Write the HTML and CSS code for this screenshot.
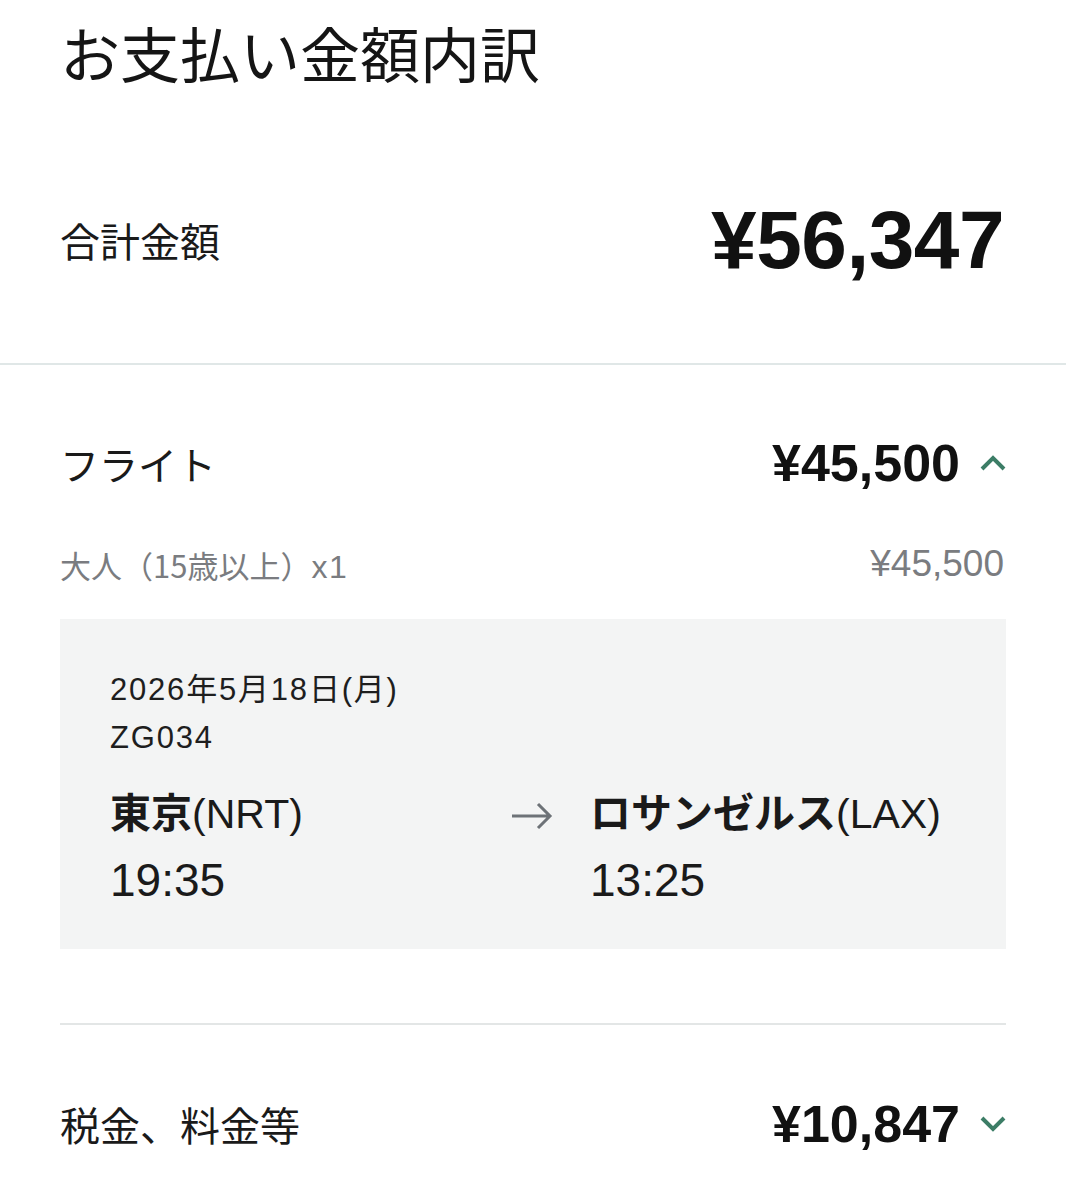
FILE: index.html
```html
<!DOCTYPE html>
<html lang="ja">
<head>
<meta charset="utf-8">
<link rel="stylesheet" href="styles.css">
</head>
<body>
<div class="page">
  <h1 class="title">お支払い金額内訳</h1>
  <div class="total-row">
    <span class="total-label">合計金額</span>
    <span class="total-amount">¥56,347</span>
  </div>
  <div class="section">
    <div class="sec-row">
      <span class="sec-label">フライト</span>
      <span class="sec-amount">¥45,500
        <svg class="chev" width="26" height="16" viewBox="0 0 26 16"><path d="M2 14 L13 3 L24 14" fill="none" stroke="#3c7d66" stroke-width="4"/></svg>
      </span>
    </div>
    <div class="sub-row">
      <span>大人（15歳以上）<span class="latin">x1</span></span>
      <span class="sub-amount">¥45,500</span>
    </div>
    <div class="flight-box">
      <div class="date">2026年5月18日(月)</div>
      <div class="flight-no">ZG034</div>
      <div class="route">
        <div class="city"><b>東京</b>(NRT)</div>
        <div class="arrow"><svg width="44" height="30" viewBox="0 0 44 30"><path d="M2 15 H40 M28 3 L40 15 L28 27" fill="none" stroke="#6d7277" stroke-width="3"/></svg></div>
        <div class="city"><b>ロサンゼルス</b>(LAX)</div>
        <div class="time">19:35</div>
        <div></div>
        <div class="time">13:25</div>
      </div>
    </div>
    <div class="divider"></div>
    <div class="sec-row tax">
      <span class="sec-label">税金、料金等</span>
      <span class="sec-amount">¥10,847
        <svg class="chev" width="26" height="16" viewBox="0 0 26 16"><path d="M2 2 L13 13 L24 2" fill="none" stroke="#3c7d66" stroke-width="4"/></svg>
      </span>
    </div>
  </div>
</div>
</body>
</html>
```

FILE: styles.css
```css
html, body {
  margin: 0;
  padding: 0;
  background: #ffffff;
}
body {
  font-family: "Liberation Sans", "Noto Sans CJK JP", sans-serif;
  color: #111;
  width: 1066px;
  overflow: hidden;
}
.page {
  height: 1200px;
}
.title {
  margin: 0;
  padding: 16px 0 0 60px;
  height: 100px;
  box-sizing: border-box;
  font-family: "Noto Sans CJK JP", sans-serif;
  font-weight: 400;
  font-size: 60px;
  line-height: 72px;
  letter-spacing: 0;
  color: #151515;
}
.total-row {
  display: flex;
  justify-content: space-between;
  align-items: center;
  height: 265px;
  padding: 86px 62px 69px 60px;
  box-sizing: border-box;
  border-bottom: 2px solid #e0e7e7;
}
.total-label {
  font-family: "Noto Sans CJK JP", sans-serif;
  font-size: 40px;
  line-height: 60px;
  color: #1a1a1a;
}
.total-amount {
  font-weight: 700;
  font-size: 82px;
  line-height: 90px;
  letter-spacing: -0.5px;
}
.section {
  padding: 0 60px;
}
.sec-row {
  display: flex;
  justify-content: space-between;
  align-items: center;
  height: 60px;
  margin-top: 68px;
}
.sec-label {
  font-family: "Noto Sans CJK JP", sans-serif;
  font-size: 39px;
  line-height: 60px;
  color: #1a1a1a;
}
.sec-amount {
  display: flex;
  align-items: center;
  gap: 20px;
  font-weight: 700;
  font-size: 52px;
  line-height: 60px;
}
.chev {
  display: block;
}
.sub-row {
  display: flex;
  justify-content: space-between;
  align-items: center;
  margin-top: 51px;
  height: 40px;
  font-family: "Noto Sans CJK JP", sans-serif;
  font-size: 31px;
  color: #7a7c80;
}
.latin {
  font-family: "Liberation Sans", sans-serif;
  font-size: 32px;
  letter-spacing: 1.5px;
}
.sub-amount {
  font-family: "Liberation Sans", sans-serif;
  font-size: 37px;
  padding-right: 2px;
}
.flight-box {
  margin-top: 35px;
  background: #f3f4f4;
  height: 330px;
  box-sizing: border-box;
  padding: 50px 50px 0 50px;
}
.date, .flight-no {
  font-size: 31px;
  line-height: 42px;
  letter-spacing: 1.8px;
  color: #1e1e1e;
}
.date {
  font-family: "Liberation Sans", "Noto Sans CJK JP", sans-serif;
}
.flight-no {
  margin-top: 6px;
}
.route {
  display: grid;
  grid-template-columns: 400px 80px auto;
  row-gap: 16px;
  margin-top: 26px;
  align-items: center;
}
.city {
  font-size: 41px;
  line-height: 50px;
  color: #1a1a1a;
}
.city b {
  font-family: "Noto Sans CJK JP", sans-serif;
  font-weight: 700;
}
.arrow {
  display: flex;
  align-items: center;
  padding-top: 8px;
}
.arrow svg {
  display: block;
}
.time {
  font-size: 46px;
  line-height: 50px;
  color: #1a1a1a;
}
.divider {
  margin-top: 74px;
  height: 2px;
  background: #e3e6e6;
}
.tax {
  margin-top: 69px;
}
.tax .sec-label {
  font-size: 40px;
}
```
